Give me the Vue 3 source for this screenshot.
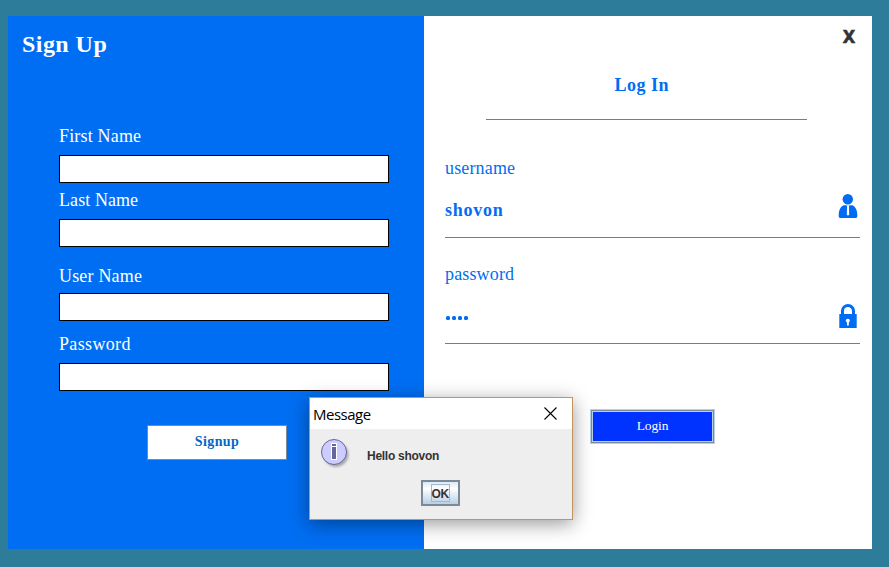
<script setup>
import { ref } from 'vue'

const fields = ref([
  { label: 'First Name', key: 'first' },
  { label: 'Last Name', key: 'last' },
  { label: 'User Name', key: 'user' },
  { label: 'Password', key: 'pass' }
])
</script>

<template>
  <div class="desktop">
    <main class="window">
      <section class="signup">
        <h1>Sign Up</h1>
        <form class="fields">
          <div v-for="f in fields" :key="f.key" class="field" :class="f.key">
            <label>{{ f.label }}</label>
            <div class="box"></div>
          </div>
        </form>
        <button class="signup-btn">Signup</button>
      </section>

      <section class="login">
        <div class="top"><button class="exit">X</button></div>
        <h2>Log In</h2>
        <div class="entry user-entry">
          <label>username</label>
          <div class="row">
            <span class="value">shovon</span>
            <svg class="icon" width="20" height="24" viewBox="0 0 20 24">
              <circle cx="9.8" cy="5.2" r="5.2" fill="#006cf2" />
              <path d="M5.500 11.300h9c3.200 1.600 4.800 5 4.800 9.700 0 2.200-.4 3-1.300 3H2c-.9 0-1.300-.8-1.300-3 0-4.700 1.500-8.100 4.800-9.700Z" fill="#006cf2" />
              <path d="M8.600 11.300h2.800l-.5 1.700.3 7.500-1.200 1.200-1.200-1.200.3-7.500Z" fill="#fff" />
            </svg>
          </div>
        </div>
        <div class="entry pass-entry">
          <label>password</label>
          <div class="row">
            <span class="dots"><i v-for="n in 4" :key="n"></i></span>
            <svg class="icon" width="20" height="24" viewBox="0 0 20 24">
              <path d="M4.500 11V6.800a5.500 5.300 0 0 1 11 0V11" fill="none" stroke="#006cf2" stroke-width="3" />
              <rect x="1.300" y="10" width="17.400" height="14" rx=".6" fill="#006cf2" />
              <path d="M8 17.500a2 2 0 1 1 3.600 0l-.8 1V21.500H9V18.500Z" fill="#fff" />
            </svg>
          </div>
        </div>
        <button class="login-btn">Login</button>
      </section>
    </main>

    <div class="dialog" role="dialog">
      <header>
        <span>Message</span>
        <svg width="13" height="13" viewBox="0 0 13 13">
          <path d="M.5.5l12 12M12.500.5l-12 12" stroke="#000" stroke-width="1.100" />
        </svg>
      </header>
      <div class="content">
        <div class="message">
          <svg width="34" height="34" viewBox="0 0 34 34">
            <defs>
              <filter id="soft" x="-20%" y="-20%" width="140%" height="140%">
                <feGaussianBlur stdDeviation="1.300" />
              </filter>
            </defs>
            <circle cx="16" cy="16.500" r="12.500" fill="#aaa" filter="url(#soft)" />
            <circle cx="14" cy="14" r="12.500" fill="#ccccff" stroke="#666699" stroke-width="1" />
            <path d="M11 5h6v17h-6Z" fill="#fff" />
            <path d="M12 6h4v2h-4ZM12 9h4v12h-4Z" fill="#666699" />
          </svg>
          <span>Hello shovon</span>
        </div>
        <button class="ok"><span>OK</span></button>
      </div>
    </div>
  </div>
</template>

<style>
body {
  margin: 0;
}
</style>

<style scoped>
* {
  box-sizing: border-box;
}
.desktop {
  position: relative;
  width: 889px;
  height: 567px;
  padding: 16px 17px 18px 8px;
  background: #2d7c9a;
  font-family: "Liberation Serif", serif;
  overflow: hidden;
}
.window {
  display: flex;
  height: 533px;
  background: #fff;
}
h1,
h2 {
  margin: 0;
}
button {
  padding: 0;
  font-family: inherit;
}
.signup {
  display: flex;
  flex-direction: column;
  width: 416px;
  background: #006ef2;
  color: #fff;
}
h1 {
  height: 108px;
  padding: 13px 0 0 14px;
  font-size: 24px;
  line-height: 30px;
  letter-spacing: 0.45px;
}
.fields {
  display: flex;
  flex-direction: column;
  margin-left: 51px;
  width: 330px;
}
.field {
  display: flex;
  flex-direction: column;
  justify-content: space-between;
  height: 59px;
}
.field label {
  font-size: 18px;
  line-height: 24px;
  letter-spacing: 0.18px;
}
.last {
  margin-top: 5px;
}
.last label {
  letter-spacing: 0.08px;
}
.user {
  height: 57px;
  margin-top: 17px;
}
.pass {
  margin-top: 11px;
}
.pass label {
  letter-spacing: 0.35px;
}
.box {
  height: 28px;
  border: 1px solid #000;
  background: #fff;
}
.signup-btn {
  width: 140px;
  height: 35px;
  margin: 34px 0 0 139px;
  padding-bottom: 2px;
  border: 1px solid #7a8a99;
  background: #fff;
  color: #0068c8;
  font-size: 14px;
  font-weight: bold;
  letter-spacing: 0.4px;
}
.login {
  display: flex;
  flex-direction: column;
  width: 448px;
  color: #006ef2;
}
.top {
  display: flex;
  justify-content: flex-end;
  height: 56px;
  padding: 8px 16px 0 0;
}
.exit {
  width: 14px;
  height: 24px;
  border: 0;
  background: none;
  color: #333;
  font-family: "Noto Sans", sans-serif;
  font-size: 18px;
  line-height: 24px;
  font-weight: 800;
  -webkit-text-stroke: 0.4px #333;
}
h2 {
  width: 321px;
  height: 48px;
  margin-left: 62px;
  padding-left: 128.5px;
  border-bottom: 1px solid #5b7fc0;
  font-size: 18px;
  line-height: 26px;
  letter-spacing: 0.5px;
}
.entry {
  display: flex;
  flex-direction: column;
  width: 415px;
  margin-left: 21px;
  border-bottom: 1px solid #5b7fc0;
}
.user-entry {
  height: 82px;
  margin-top: 36px;
}
.pass-entry {
  height: 82px;
  margin-top: 24px;
}
.entry label {
  font-size: 18px;
  line-height: 25px;
  letter-spacing: 0.15px;
}
.row {
  display: flex;
  justify-content: space-between;
  align-items: center;
  height: 24px;
  margin-top: 13px;
  padding-right: 2px;
}
.pass-entry .row {
  margin-top: 17px;
}
.value {
  font-size: 18px;
  font-weight: bold;
  letter-spacing: 0.75px;
  padding-top: 9px;
}
.dots {
  display: flex;
  gap: 2px;
  padding: 3px 0 0 1px;
}
.dots i {
  width: 4px;
  height: 4px;
  border-radius: 1.5px;
  background: #006cf2;
}
.login-btn {
  width: 125px;
  height: 35px;
  margin: 65px 0 0 166px;
  padding-bottom: 2px;
  border: 1px solid #b8cfe5;
  outline: 1px solid #7a8a99;
  outline-offset: -2px;
  box-shadow: inset 0 0 0 2px #b8cfe5;
  background: #0033ff;
  color: #fff;
  font-size: 13.5px;
  letter-spacing: -0.1px;
}
.dialog {
  position: absolute;
  left: 309px;
  top: 397px;
  width: 264px;
  height: 123px;
  border: 1px solid #c4935f;
  background: #eee;
  box-shadow: 0 4px 18px rgba(0, 0, 0, 0.4);
}
header {
  display: flex;
  justify-content: space-between;
  align-items: center;
  height: 31px;
  padding: 0 15px 0 3px;
  background: #fff;
  color: #000;
  font-family: "Open Sans", sans-serif;
  font-size: 15px;
  letter-spacing: -0.5px;
}
header svg {
  margin-bottom: 1px;
}
.content {
  display: flex;
  flex-direction: column;
  align-items: center;
  padding: 9px 2px 0 0;
  color: #333;
  font-family: "Liberation Sans", sans-serif;
  font-size: 12px;
  font-weight: bold;
}
.message {
  display: flex;
  align-items: center;
  align-self: flex-start;
  gap: 13px;
  height: 34px;
  padding-left: 10px;
  letter-spacing: -0.28px;
}
.message span {
  padding-top: 2px;
}
.ok {
  display: flex;
  align-items: center;
  justify-content: center;
  width: 39px;
  height: 26px;
  margin-top: 8px;
  border: 2px solid #7a8a99;
  background: linear-gradient(#dde8f3, #fff 30%, #b8cfe5);
  color: #333;
  font-size: 12px;
  font-weight: bold;
}
.ok span {
  width: 19px;
  height: 18px;
  border: 1px solid #a3b8cc;
  line-height: 18px;
  letter-spacing: -0.3px;
}
</style>
